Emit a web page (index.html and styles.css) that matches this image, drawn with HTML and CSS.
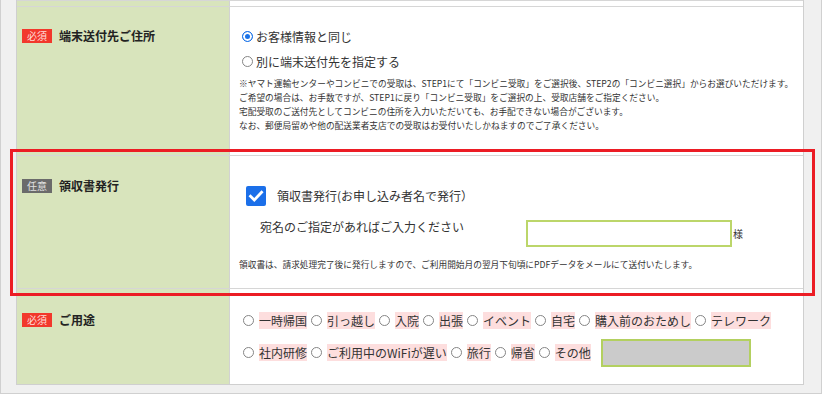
FILE: index.html
```html
<!DOCTYPE html>
<html lang="ja">
<head>
<meta charset="utf-8">
<title>お申し込みフォーム</title>
<link rel="stylesheet" href="styles.css">
</head>
<body>
<div class="page">
  <div class="form">
    <div class="row stub">
      <div class="th"></div>
      <div class="td"></div>
    </div>

    <div class="row r-address">
      <div class="th">
        <div class="label"><span class="badge req">必須</span><span class="label-text">端末送付先ご住所</span></div>
      </div>
      <div class="td">
        <div class="choice"><span class="radio on"></span><span>お客様情報と同じ</span></div>
        <div class="choice"><span class="radio"></span><span>別に端末送付先を指定する</span></div>
        <p class="notes">※ヤマト運輸センターやコンビニでの受取は、STEP1にて「コンビニ受取」をご選択後、STEP2の「コンビニ選択」からお選びいただけます。<br>ご希望の場合は、お手数ですが、STEP1に戻り「コンビニ受取」をご選択の上、受取店舗をご指定ください。<br>宅配受取のご送付先としてコンビニの住所を入力いただいても、お手配できない場合がございます。<br>なお、郵便局留めや他の配送業者支店での受取はお受付いたしかねますのでご了承ください。</p>
      </div>
    </div>

    <div class="row r-receipt">
      <div class="th">
        <div class="label"><span class="badge opt">任意</span><span class="label-text">領収書発行</span></div>
      </div>
      <div class="td">
        <div class="check-line">
          <span class="checkbox"><svg viewBox="0 0 20 20" width="20" height="20"><path d="M4.5 10.2 L8.3 14 L15.6 6.2" fill="none" stroke="#fff" stroke-width="2.8" stroke-linecap="square"/></svg></span>
          <span>領収書発行(お申し込み者名で発行）</span>
        </div>
        <div class="addressee">
          <span class="addressee-text">宛名のご指定があればご入力ください</span>
          <span class="text-input"></span>
          <span class="sama">様</span>
        </div>
        <p class="notes">領収書は、請求処理完了後に発行しますので、ご利用開始月の翌月下旬頃にPDFデータをメールにて送付いたします。</p>
      </div>
    </div>

    <div class="row r-purpose">
      <div class="th">
        <div class="label"><span class="badge req">必須</span><span class="label-text">ご用途</span></div>
      </div>
      <div class="td">
        <div class="opts first">
          <span class="radio"></span><span class="opt-label">一時帰国</span>
          <span class="radio"></span><span class="opt-label">引っ越し</span>
          <span class="radio"></span><span class="opt-label">入院</span>
          <span class="radio"></span><span class="opt-label">出張</span>
          <span class="radio"></span><span class="opt-label">イベント</span>
          <span class="radio"></span><span class="opt-label">自宅</span>
          <span class="radio"></span><span class="opt-label">購入前のおためし</span>
          <span class="radio"></span><span class="opt-label">テレワーク</span>
        </div>
        <div class="opts second">
          <span class="radio"></span><span class="opt-label">社内研修</span>
          <span class="radio"></span><span class="opt-label">ご利用中のWiFiが遅い</span>
          <span class="radio"></span><span class="opt-label">旅行</span>
          <span class="radio"></span><span class="opt-label">帰省</span>
          <span class="radio"></span><span class="opt-label">その他</span>
          <span class="other-input"></span>
        </div>
      </div>
    </div>
  </div>
  <div class="highlight"></div>
</div>
</body>
</html>
```

FILE: styles.css
```css
* { box-sizing: border-box; }
html, body { margin: 0; padding: 0; }
body {
  font-family: "Noto Sans CJK JP", "Noto Sans", sans-serif;
  color: #333;
  background: #f0f0f0;
}
.page {
  position: relative;
  width: 822px;
  height: 394px;
  background: #f0f0f0;
  border-left: 1px solid #d0d0d0;
  border-right: 1px solid #d0d0d0;
  border-bottom: 1px solid #d0d0d0;
  padding: 0 17px 8px 15px;
}
.form {
  background: #fff;
  border-left: 1px solid #cfcfcf;
  border-right: 1px solid #cfcfcf;
  border-bottom: 1px solid #cfcfcf;
}
.row {
  display: grid;
  grid-template-columns: 213px 1fr;
  border-bottom: 1px solid #d6d6d6;
}
.row:last-child { border-bottom: none; }
.th {
  background: #d8e4bc;
  border-right: 1px solid #d2d2d2;
  padding-left: 5px;
}
.td {
  background: #fff;
  padding-left: 9px;
}
.stub { border-top: 1px solid #d6d6d6; height: 7px; }

.label { display: flex; align-items: center; height: 14px; }
.badge {
  display: inline-block;
  width: 30px;
  height: 14px;
  line-height: 14px;
  font-size: 10px;
  text-align: center;
  margin-right: 7px;
}
.badge.req { background: #f2382c; color: #ffdcd8; }
.badge.opt { background: #6b6b6b; color: #e0e0e0; }
.label-text { font-size: 12px; font-weight: bold; color: #222; line-height: 14px; }

/* Row 1 */
.r-address { height: 149px; }
.r-address .th { padding-top: 22px; }
.r-address .td { padding-top: 17px; }
.choice {
  display: flex;
  align-items: center;
  height: 25px;
  font-size: 12px;
  padding-left: 3px;
}
.radio {
  display: inline-block;
  width: 11px;
  height: 11px;
  border: 1px solid #858585;
  border-radius: 50%;
  background: #fff;
  flex: none;
}
.choice .radio { margin-right: 3px; }
.radio.on {
  border-color: #1a73e8;
  background: #1a73e8;
  box-shadow: inset 0 0 0 2px #fff;
}
.notes {
  margin: 3px 0 0;
  font-size: 8.7px;
  line-height: 14px;
  color: #333;
  white-space: nowrap;
}

/* Row 2 */
.r-receipt { height: 133px; }
.r-receipt .th { padding-top: 23px; }
.r-receipt .td { padding-top: 29px; }
.check-line {
  display: flex;
  align-items: center;
  height: 21px;
  font-size: 12px;
  padding-left: 7px;
}
.checkbox {
  width: 20px;
  height: 20px;
  border-radius: 2px;
  background: #1b6fe9;
  margin-right: 11px;
  display: inline-flex;
}
.addressee {
  display: flex;
  align-items: flex-start;
  margin-top: 14px;
  padding-left: 21px;
}
.addressee-text {
  width: 266px;
  font-size: 12px;
  line-height: 14px;
}
.text-input {
  width: 206px;
  height: 27px;
  border: 2px solid #bcd66a;
  background: #fff;
}
.sama {
  font-size: 10px;
  line-height: 12px;
  margin-top: 8px;
  margin-left: 1px;
}
.r-receipt .notes { margin-top: 11px; }

/* Row 3 */
.r-purpose { height: 95px; }
.r-purpose .th { padding-top: 24px; }
.opts {
  display: flex;
  align-items: center;
  font-size: 12px;
}
.opts.first { height: 17px; margin-top: 23px; }
.opts.second { height: 27px; margin-top: 10px; }
.opts .radio { margin-left: 4px; margin-right: 5px; }
.opt-label {
  background: #fddede;
  line-height: 17px;
  height: 17px;
  white-space: nowrap;
}
.other-input {
  width: 150px;
  height: 28px;
  margin-left: 10px;
  background: #cbcbcb;
  border: 2px solid #b3d060;
}

.highlight {
  position: absolute;
  left: 9px;
  top: 149px;
  width: 805px;
  height: 147px;
  border: 3px solid #ec1c24;
  pointer-events: none;
}
```
